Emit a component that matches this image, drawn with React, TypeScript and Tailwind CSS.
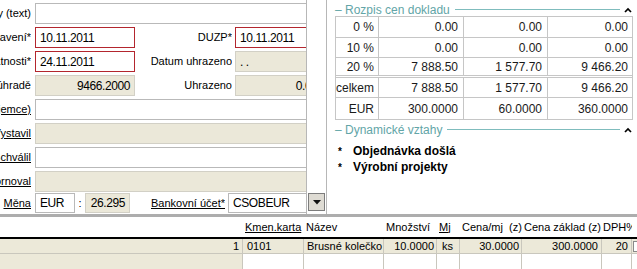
import React from 'react';

type Tone = 'white' | 'gray' | 'red';

const toneClass: Record<Tone, string> = {
  white: 'bg-white border-[#b9b9b9]',
  gray: 'bg-[#ebe8d9] border-[#d2d0c6]',
  red: 'bg-white border-[#b3262e]',
};

const Field = ({
  w,
  tone = 'white',
  value = '',
  right = false,
}: {
  w: string;
  tone?: Tone;
  value?: string;
  right?: boolean;
}) => (
  <div
    className={`${w} h-full shrink-0 border flex items-center px-[4px] text-[12px] tracking-[-0.4px] whitespace-nowrap ${toneClass[tone]} ${
      right ? 'justify-end' : ''
    }`}
  >
    {value}
  </div>
);

const Label = ({ text, w, link = false }: { text: string; w: string; link?: boolean }) => (
  <div className={`${w} h-full shrink-0 flex items-center justify-end overflow-hidden whitespace-nowrap`}>
    <span className={link ? 'underline' : ''}>{text}</span>
  </div>
);

const Gap = ({ w }: { w: string }) => <div className={`${w} shrink-0`} />;

const LeftForm = () => (
  <div className="w-[306px] h-full shrink-0 overflow-hidden flex flex-col gap-[3px]">
    <div className="h-[21px] -mt-[21px] flex shrink-0">
      <Label text="" w="w-[35px]" />
      <Field w="w-[100px]" />
      <Label text="" w="w-[100px]" />
      <Field w="w-[100px]" />
    </div>
    <div className="h-[21px] flex shrink-0">
      <Label text="Poznámky (text)" w="w-[31px]" />
      <Gap w="w-[4px]" />
      <Field w="w-[290px]" />
    </div>
    <div className="h-[21px] flex shrink-0">
      <Label text="Datum vystavení*" w="w-[31px]" />
      <Gap w="w-[4px]" />
      <Field w="w-[100px]" tone="red" value="10.11.2011" />
      <Label text="DUZP*" w="w-[97px]" />
      <Gap w="w-[3px]" />
      <Field w="w-[100px]" tone="red" value="10.11.2011" />
    </div>
    <div className="h-[21px] flex shrink-0">
      <Label text="Datum splatnosti*" w="w-[31px]" />
      <Gap w="w-[4px]" />
      <Field w="w-[100px]" tone="red" value="24.11.2011" />
      <Label text="Datum uhrazeno" w="w-[97px]" />
      <Gap w="w-[3px]" />
      <Field w="w-[100px]" tone="gray" value="  .  ." />
    </div>
    <div className="h-[21px] flex shrink-0">
      <Label text="K úhradě" w="w-[31px]" />
      <Gap w="w-[4px]" />
      <Field w="w-[100px]" tone="gray" value="9466.2000" right />
      <Label text="Uhrazeno" w="w-[97px]" />
      <Gap w="w-[3px]" />
      <Field w="w-[100px]" tone="gray" value="0.0000" right />
    </div>
    <div className="h-[21px] flex shrink-0">
      <Label text="Banka (příjemce)" w="w-[31px]" link />
      <Gap w="w-[4px]" />
      <Field w="w-[290px]" />
    </div>
    <div className="h-[21px] flex shrink-0">
      <Label text="Vystavil" w="w-[31px]" link />
      <Gap w="w-[4px]" />
      <Field w="w-[290px]" tone="gray" />
    </div>
    <div className="h-[21px] flex shrink-0">
      <Label text="Schválil" w="w-[31px]" link />
      <Gap w="w-[4px]" />
      <Field w="w-[290px]" />
    </div>
    <div className="h-[21px] flex shrink-0">
      <Label text="Stornoval" w="w-[31px]" link />
      <Gap w="w-[4px]" />
      <Field w="w-[290px]" tone="gray" />
    </div>
    <div className="h-[20px] -mt-[2px] flex shrink-0">
      <Label text="Měna" w="w-[31px]" link />
      <Gap w="w-[4px]" />
      <Field w="w-[40px]" value="EUR" />
      <div className="w-[10px] shrink-0 flex items-center justify-center">:</div>
      <Field w="w-[45px]" tone="gray" value="26.295" right />
      <Label text="Bankovní účet*" w="w-[95px]" link />
      <Gap w="w-[3px]" />
      <Field w="w-[100px]" value="CSOBEUR" />
    </div>
  </div>
);

const SectionTitle = ({ title, className = '' }: { title: string; className?: string }) => (
  <div className={`h-[13px] flex items-center shrink-0 ${className}`}>
    <span className="text-[#62a5a7] text-[12px] whitespace-nowrap">– {title}</span>
    <div className="flex-1 h-px bg-[#7fbcbd] ml-[5px]" />
    <svg width="8" height="6" viewBox="0 0 8 6" className="ml-[4px] mr-[1px]">
      <path d="M1 5 L4 2 L7 5" fill="none" stroke="#000" strokeWidth="1.7" />
    </svg>
  </div>
);

const priceRows = [
  { label: '0 %', a: '0.00', b: '0.00', c: '0.00', h: 'h-[21px]' },
  { label: '10 %', a: '0.00', b: '0.00', c: '0.00', h: 'h-[20px]' },
  { label: '20 %', a: '7 888.50', b: '1 577.70', c: '9 466.20', h: 'h-[20px]', thick: true },
  { label: 'celkem', a: '7 888.50', b: '1 577.70', c: '9 466.20', h: 'h-[20px]' },
  { label: 'EUR', a: '300.0000', b: '60.0000', c: '360.0000', h: 'h-[21px]', last: true },
];

const RightPanel = () => (
  <div className="flex-1 h-full pl-[8px] pr-[4px] flex flex-col">
    <SectionTitle title="Rozpis cen dokladu" className="mt-[3px]" />
    <div className="border border-[#c6c6c6] text-[12px] text-[#1a1a1a]">
      {priceRows.map((r) => (
        <div
          key={r.label}
          className={`grid grid-cols-[43px_85px_84px_1fr] ${r.h} ${
            r.last ? '' : r.thick ? 'border-b-[3px] border-double border-[#c6c6c6]' : 'border-b border-[#c6c6c6]'
          }`}
        >
          <div className="flex items-center justify-end pr-[4px] border-r border-[#c6c6c6]">{r.label}</div>
          <div className="flex items-center justify-end pr-[5px] border-r border-[#c6c6c6]">{r.a}</div>
          <div className="flex items-center justify-end pr-[5px] border-r border-[#c6c6c6]">{r.b}</div>
          <div className="flex items-center justify-end pr-[4px]">{r.c}</div>
        </div>
      ))}
    </div>
    <SectionTitle title="Dynamické vztahy" className="mt-[3px]" />
    <div className="mt-[7px] flex flex-col text-[12px] font-bold">
      {['Objednávka došlá', 'Výrobní projekty'].map((t) => (
        <div key={t} className="h-[16px] flex items-center">
          <span className="w-[18px] pl-[3px] text-[10px]">*</span>
          <span>{t}</span>
        </div>
      ))}
    </div>
  </div>
);

const cols = 'grid grid-cols-[243px_61px_80px_53px_23px_62px_80px_30px_1fr]';
const cell = 'h-full flex items-center border-r border-[#c9c7bd] whitespace-nowrap overflow-hidden';

const ItemsGrid = () => (
  <div className="flex-1 flex flex-col text-[11px]">
    <div className={`${cols} h-[20px] shrink-0 bg-white`}>
      <div />
      <div className="pl-[2px] flex items-center"><span className="underline">Kmen.karta</span></div>
      <div className="pl-[2px] flex items-center">Název</div>
      <div className="pl-[2px] flex items-center">Množství</div>
      <div className="pl-[2px] flex items-center"><span className="underline">Mj</span></div>
      <div className="pl-[2px] flex items-center whitespace-nowrap">Cena/mj&nbsp; (z)</div>
      <div className="pl-[2px] flex items-center whitespace-nowrap">Cena základ (z)</div>
      <div className="pl-[1px] flex items-center whitespace-nowrap overflow-hidden">DPH%*</div>
      <div />
    </div>
    <div className="h-[2px] bg-black shrink-0" />
    <div className={`${cols} h-[15px] shrink-0 bg-[#ece9d9] border-b border-[#c9c7bd]`}>
      <div className={`${cell} justify-end pr-[3px]`}>1</div>
      <div className={`${cell} pl-[4px]`}>0101</div>
      <div className={`${cell} pl-[3px]`}>Brusné kolečko</div>
      <div className={`${cell} justify-end pr-[2px]`}>10.0000</div>
      <div className={`${cell} pl-[5px]`}>ks</div>
      <div className={`${cell} justify-end pr-[2px]`}>30.0000</div>
      <div className={`${cell} justify-end pr-[3px]`}>300.0000</div>
      <div className={`${cell} justify-end pr-[3px]`}>20</div>
      <div className="h-full flex items-center pl-[1px]">
        <div className="w-[6px] h-[11px] border border-[#8a8a8a] bg-white" />
      </div>
    </div>
    <div className={`${cols} flex-1`}>
      <div className={`${cell} bg-[#ece9d9]`} />
      <div className={cell} />
      <div className={cell} />
      <div className={cell} />
      <div className={cell} />
      <div className={cell} />
      <div className={cell} />
      <div className={cell} />
      <div />
    </div>
  </div>
);

const DropButton = () => (
  <div className="w-[17px] h-[18px] border border-[#7d7d7d] bg-[#dedbd3] flex items-center justify-center">
    <svg width="8" height="5" viewBox="0 0 8 5">
      <path d="M0 0 L8 0 L4 4.5 Z" fill="#111" />
    </svg>
  </div>
);

export default function App() {
  return (
    <div className="w-[637px] h-[269px] overflow-hidden bg-white text-black font-['Liberation_Sans',Arial,sans-serif] text-[11px] flex flex-col">
      <div className="flex h-[214px] shrink-0">
        <LeftForm />
        <div className="w-[21px] h-full shrink-0 border-x border-[#b7b7b7] flex flex-col justify-end items-center pb-[3px]">
          <DropButton />
        </div>
        <RightPanel />
      </div>
      <div className="h-[3px] bg-[#adadad] shrink-0" />
      <ItemsGrid />
    </div>
  );
}
